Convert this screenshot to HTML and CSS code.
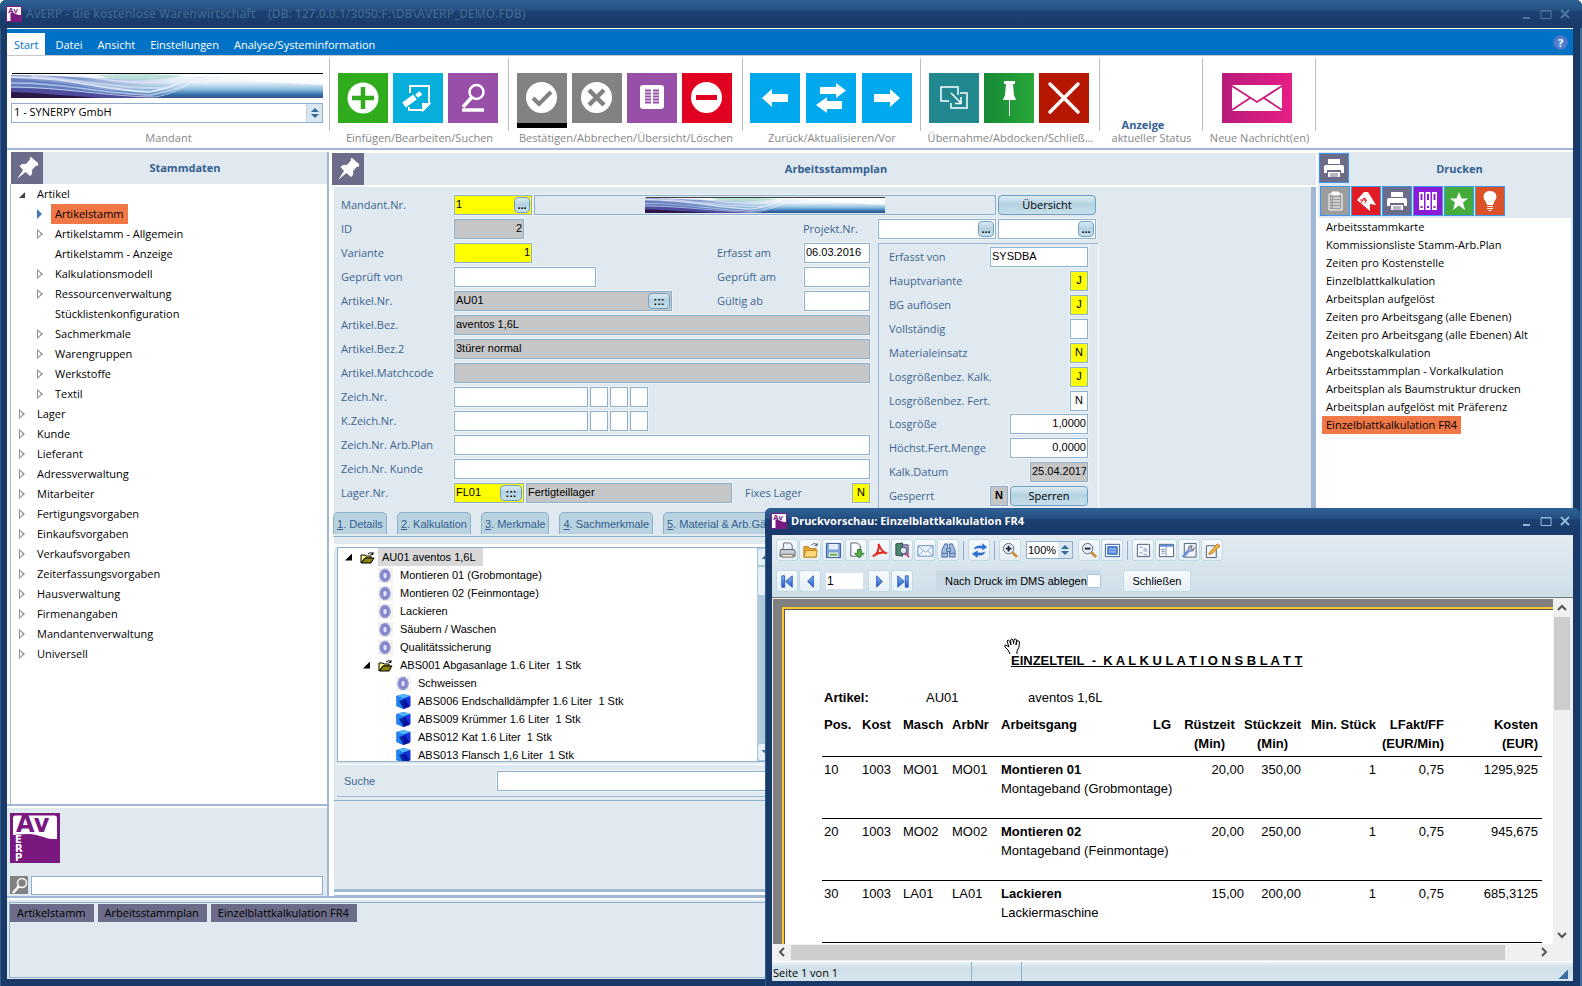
FILE: index.html
```html
<!DOCTYPE html>
<html lang="de">
<head>
<meta charset="utf-8">
<title>AvERP - die kostenlose Warenwirtschaft</title>
<link rel="stylesheet" href="styles.css">
</head>
<body>
<svg class="defs" aria-hidden="true">
  <defs>
    <linearGradient id="gWave" x1="0" y1="0" x2="0" y2="1"><stop offset="0" stop-color="#fff"/><stop offset=".35" stop-color="#f0f6fb"/><stop offset=".65" stop-color="#8fbfe0"/><stop offset=".88" stop-color="#2f6cab"/><stop offset="1" stop-color="#3a4f8c"/></linearGradient>
    <linearGradient id="gWaveL" x1="0" y1="0" x2="1" y2="0"><stop offset="0" stop-color="#8794cc"/><stop offset=".35" stop-color="#6f8cc8" stop-opacity=".9"/><stop offset="1" stop-color="#b4d0ea" stop-opacity="0"/></linearGradient>
    <linearGradient id="gPink" x1="0" y1="0" x2="1" y2="0"><stop offset="0" stop-color="#b81a7c"/><stop offset="1" stop-color="#e61e84"/></linearGradient>
    <linearGradient id="gArrow" x1="0" y1="0" x2="0" y2="1"><stop offset="0" stop-color="#8fbdf5"/><stop offset="1" stop-color="#1c55c8"/></linearGradient>
  </defs>
  <symbol id="wave" viewBox="0 0 312 25" preserveAspectRatio="none">
    <rect width="312" height="25" fill="url(#gWave)"/>
    <path d="M0 2C60 2 110 10 190 2C165 18 150 24 130 25H0z" fill="url(#gWaveL)"/>
    <path d="M0 5C40 8 90 18 140 21L120 25H0z" fill="#4a6cb4" opacity=".55"/>
    <path d="M0 15C50 15 90 22 140 23L130 25H0z" fill="#4a3c94" opacity=".75"/>
    <path d="M0 19C30 20 60 23 90 25H0z" fill="#2c1848"/>
    <path d="M85 2C110 10 150 7 172 3C150 1 120 1 85 2z" fill="#a8d8cc" opacity=".75"/>
    <path d="M190 3C222 3 235 9 312 12V1H190z" fill="#fff" opacity=".75"/>
    <g fill="none" stroke="#e8ecfa"><path d="M0 4C60 4 90 17 138 19C165 15 170 6 196 4" opacity=".85" stroke-width="2"/><path d="M0 10C50 9 90 21 140 22C168 18 174 8 210 4" opacity=".6" stroke-width="1.500"/><path d="M20 3C70 6 100 16 155 15" opacity=".6" stroke-width="2"/><path d="M0 14C50 14 100 24 145 24C172 18 178 9 192 4" opacity=".7"/><path d="M60 2C90 6 120 12 168 9" opacity=".7" stroke-width="1.500"/></g>
    <path d="M1 0H312V1H1z" fill="#000"/>
  </symbol>
  <symbol id="pin" viewBox="0 0 32 32"><path d="M20 5L27 11Q28 13 26 14L25 13.500L21 18Q22 22 19 24L14.500 20L6 27L12 18L8.500 14Q11 11 15 12L19 7.500Q18 5.500 20 5z" fill="#fff"/></symbol>
  <symbol id="printer" viewBox="0 0 28 28"><path d="M8 5H20V10H8zM6 11H22Q24 11 24 13V19H21V16H7V19H4V13Q4 11 6 11zM8 18H20V23H8z" fill="#fff"/><path d="M10 20H18M10 22H18" stroke="#6c6e8c"/></symbol>
  <symbol id="folder" viewBox="0 0 15 13"><path d="M1 4H5L6 5H11V7H5L1 12z" fill="#f8f47c" stroke="#000"/><path d="M1.500 12L5 7H14L11 12z" fill="#8a8408" stroke="#000"/><path d="M8 3Q11 0 13 3M13 1V3.500H10.500" fill="none" stroke="#000"/></symbol>
  <symbol id="gear" viewBox="0 0 15 15"><rect width="15" height="15" fill="#f3f2ee"/><ellipse cx="7" cy="7.500" rx="3.500" ry="4.500" fill="#e4e4f4" stroke="#8385cc" stroke-width="3.500"/><ellipse cx="7" cy="7.500" rx="5" ry="6.300" fill="none" stroke="#9c9ed8" stroke-width="1.500" stroke-dasharray="2 1"/></symbol>
  <symbol id="cube" viewBox="0 0 15 15"><path d="M7.500 0L14.500 2V12L7.500 15L.5 12V2z" fill="#1232dc"/><path d="M7.500 0L14.500 2L7.500 4.500L.5 2z" fill="#4fb8f8"/><path d="M.5 2L7.500 4.500V15L.5 12z" fill="#1c86f0"/><path d="M3 7L9 5L14 13L7.500 15z" fill="#06078c" opacity=".75"/></symbol>
  <symbol id="spin" viewBox="0 0 8 10"><path d="M0 4L4 0L8 4zM0 6L4 10L8 6z" fill="#336b98"/></symbol>
</svg>

<div class="window">
  <header class="titlebar">
    <svg class="app-ico" viewBox="0 0 16 16" aria-hidden="true"><rect width="16" height="16" rx="1" fill="#7a1980"/><path d="M1 1H15V9C10 9 8 6 4.500 6.500V15H1z" fill="#fff"/><text x="2" y="7">Av</text></svg>
    <h1>AvERP - die kostenlose Warenwirtschaft &nbsp;&nbsp; (DB: 127.0.0.1/3050:F:\DB\AVERP_DEMO.FDB)</h1>
    <div class="winbtns dim">
      <button aria-label="Minimieren"><svg viewBox="0 0 12 12"><path d="M2 10H9" stroke-width="2"/></svg></button>
      <button aria-label="Maximieren"><svg viewBox="0 0 12 12"><path d="M1 2.500H11V10.500H1zM1 3H11"/></svg></button>
      <button aria-label="Schließen"><svg viewBox="0 0 12 12"><path d="M2 2L10 10M10 2L2 10" stroke-width="2"/></svg></button>
    </div>
  </header>

  <div class="client">
    <nav class="menu">
      <a href="#" class="active">Start</a><a href="#">Datei</a><a href="#">Ansicht</a><a href="#">Einstellungen</a><a href="#">Analyse/Systeminformation</a>
      <button class="help" aria-label="Hilfe">?</button>
    </nav>

    <section class="ribbon">
      <div class="rg rg-mandant">
        <div class="rg-body">
          <svg class="banner"><use href="#wave"/></svg>
          <div class="combo"><select aria-label="Mandant"><option>1 - SYNERPY GmbH</option></select><span class="spin"><svg><use href="#spin"/></svg></span></div>
        </div>
        <p>Mandant</p>
      </div>
      <div class="rg rg-3">
        <div class="rg-body">
          <button class="tile green" aria-label="Einfügen"><svg viewBox="0 0 50 50"><circle cx="25" cy="25" r="15.500" fill="#fff"/><path d="M25 14V36M14 25H36" stroke="#2fab1c" stroke-width="4.500"/></svg></button>
          <button class="tile cyan" aria-label="Bearbeiten"><svg viewBox="0 0 50 50" fill="none" stroke="#fff" stroke-width="2"><path d="M17 20V13H36V31L30 37H16V34"/><path d="M36 31H30V37z" fill="#fff"/><path d="M11 32L22 24" stroke-width="6"/><path d="M23.500 23L28 20" stroke-width="4.500"/></svg></button>
          <button class="tile purple" aria-label="Suchen"><svg viewBox="0 0 50 50" fill="none" stroke="#fff"><circle cx="28.500" cy="19" r="7" stroke-width="2.500"/><path d="M24 24L15 34" stroke-width="3.500"/><path d="M14 37H36" stroke-width="3.500"/></svg></button>
        </div>
        <p>Einfügen/Bearbeiten/Suchen</p>
      </div>
      <div class="rg rg-4">
        <div class="rg-body">
          <button class="tile grey marked" aria-label="Bestätigen"><svg viewBox="0 0 50 50"><circle cx="24.500" cy="24.500" r="15.500" fill="#fff"/><path d="M16 25L22 31L34 19" fill="none" stroke="#828282" stroke-width="4"/></svg></button>
          <button class="tile grey" aria-label="Abbrechen"><svg viewBox="0 0 50 50"><circle cx="24.500" cy="24.500" r="15.500" fill="#fff"/><path d="M17 17L32 32M32 17L17 32" stroke="#828282" stroke-width="4.500"/></svg></button>
          <button class="tile purple" aria-label="Übersicht"><svg viewBox="0 0 50 50"><rect x="13" y="12" width="24" height="24" rx="3" fill="#fff"/><path d="M18 17.500H24M26 17.500H32M18 20.500H24M26 20.500H32M18 23.500H24M26 23.500H32M18 26.500H24M26 26.500H32M18 29.500H24M26 29.500H32" stroke="#984fa8" stroke-width="2"/></svg></button>
          <button class="tile red" aria-label="Löschen"><svg viewBox="0 0 50 50"><circle cx="24.500" cy="24.500" r="15.500" fill="#fff"/><path d="M14 24.500H35" stroke="#e1001f" stroke-width="5"/></svg></button>
        </div>
        <p>Bestätigen/Abbrechen/Übersicht/Löschen</p>
      </div>
      <div class="rg rg-3b">
        <div class="rg-body">
          <button class="tile sky" aria-label="Zurück"><svg viewBox="0 0 50 50" fill="#fff"><path d="M12 25L22 16V21H38V29H22V34z"/></svg></button>
          <button class="tile sky" aria-label="Aktualisieren"><svg viewBox="0 0 50 50" fill="#fff"><path d="M14 14H30V10L40 17.500L30 25V21H14zM36 28H21V24L10 32L21 40V36H36z"/></svg></button>
          <button class="tile sky" aria-label="Vor"><svg viewBox="0 0 50 50" fill="#fff"><path d="M38 25L28 16V21H12V29H28V34z"/></svg></button>
        </div>
        <p>Zurück/Aktualisieren/Vor</p>
      </div>
      <div class="rg rg-3c">
        <div class="rg-body">
          <button class="tile teal" aria-label="Übernahme"><svg viewBox="0 0 50 50" fill="none" stroke="#fff" stroke-width="1.500"><path d="M20 28H12V14H29V22M31 20H38V35H22V30M22 20L32 30M32 24V30.500H26"/></svg></button>
          <button class="tile forest" aria-label="Abdocken"><svg viewBox="0 0 50 50"><path d="M20 8H31V11H29L30 22L32 27H19L21 22L22 11H20z" fill="#fff"/><path d="M25.500 27V43" stroke="#fff"/></svg></button>
          <button class="tile brick" aria-label="Schließen"><svg viewBox="0 0 50 50"><path d="M11 11L39 39M39 11L11 39" stroke="#fff" stroke-width="3.500" stroke-linecap="round"/></svg></button>
        </div>
        <p>Übernahme/Abdocken/Schließ...</p>
      </div>
      <div class="rg rg-status">
        <div class="rg-body"><strong>Anzeige</strong></div>
        <p>aktueller Status</p>
      </div>
      <div class="rg rg-mail">
        <div class="rg-body">
          <button class="tile wide" aria-label="Neue Nachrichten"><svg viewBox="0 0 70 50"><rect width="70" height="50" fill="url(#gPink)"/><rect x="10" y="12" width="50" height="26" fill="#fff"/><path d="M10 13L35 29L60 13M10 37L28 25M60 37L42 25" fill="none" stroke="#c71b7e" stroke-width="1.800"/></svg></button>
        </div>
        <p>Neue Nachricht(en)</p>
      </div>
    </section>

    <div class="main">
      <aside class="left">
        <div class="head"><button class="pinbtn" aria-label="Anheften"><svg><use href="#pin"/></svg></button><h2>Stammdaten</h2></div>
        <ul class="nav">
          <li class="open"><a href="#">Artikel</a>
            <ul>
              <li class="cur"><a href="#">Artikelstamm</a></li>
              <li class="sub"><a href="#">Artikelstamm - Allgemein</a></li>
              <li><a href="#">Artikelstamm - Anzeige</a></li>
              <li class="sub"><a href="#">Kalkulationsmodell</a></li>
              <li class="sub"><a href="#">Ressourcenverwaltung</a></li>
              <li><a href="#">Stücklistenkonfiguration</a></li>
              <li class="sub"><a href="#">Sachmerkmale</a></li>
              <li class="sub"><a href="#">Warengruppen</a></li>
              <li class="sub"><a href="#">Werkstoffe</a></li>
              <li class="sub"><a href="#">Textil</a></li>
            </ul>
          </li>
          <li class="sub"><a href="#">Lager</a></li>
          <li class="sub"><a href="#">Kunde</a></li>
          <li class="sub"><a href="#">Lieferant</a></li>
          <li class="sub"><a href="#">Adressverwaltung</a></li>
          <li class="sub"><a href="#">Mitarbeiter</a></li>
          <li class="sub"><a href="#">Fertigungsvorgaben</a></li>
          <li class="sub"><a href="#">Einkaufsvorgaben</a></li>
          <li class="sub"><a href="#">Verkaufsvorgaben</a></li>
          <li class="sub"><a href="#">Zeiterfassungsvorgaben</a></li>
          <li class="sub"><a href="#">Hausverwaltung</a></li>
          <li class="sub"><a href="#">Firmenangaben</a></li>
          <li class="sub"><a href="#">Mandantenverwaltung</a></li>
          <li class="sub"><a href="#">Universell</a></li>
        </ul>
        <div class="brand">
          <svg class="logo" viewBox="0 0 50 50" role="img" aria-label="AvERP">
            <rect width="50" height="50" fill="#79187f"/>
            <path d="M5 2.500H45Q47 2.500 47 5V26C36 27 28 20 16 21Q8 21.500 3 22V5Q3 2.500 5 2.500z" fill="#fff"/>
            <text class="logo-av" x="6" y="19">Av</text>
            <text class="logo-erp" x="5" y="30">E</text><text class="logo-erp" x="5" y="39">R</text><text class="logo-erp" x="5" y="48">P</text>
          </svg>
          <div class="find"><label for="q"><svg viewBox="0 0 18 18" fill="none" stroke="#fff"><circle cx="12" cy="7" r="4.500" stroke-width="1.500"/><path d="M9 10L3 17" stroke-width="2.500"/></svg></label><input id="q" aria-label="Suchen"></div>
        </div>
      </aside>

      <main class="center">
        <div class="head"><button class="pinbtn" aria-label="Anheften"><svg><use href="#pin"/></svg></button><h2>Arbeitsstammplan</h2></div>
        <div class="sheet">
          <form class="form">
            <div class="row"><label for="f1">Mandant.Nr.</label><div class="field y w78"><input id="f1" value="1"><button type="button" class="dots">...</button></div><div class="field pic"><svg><use href="#wave"/></svg></div><button type="button" class="btn w98">Übersicht</button></div>
            <div class="row"><label for="f2">ID</label><div class="field g w70 r"><input id="f2" value="2" readonly></div><span class="grow"></span><label for="f3" class="l75">Projekt.Nr.</label><div class="field w118"><input id="f3"><button type="button" class="dots">...</button></div><div class="field w98"><input aria-label="Projekt Position"><button type="button" class="dots">...</button></div></div>
            <div class="cols">
              <div class="colA">
                <div class="row"><label for="f4">Variante</label><div class="field y w78 r"><input id="f4" value="1"></div><span class="grow"></span><label for="f5" class="l87">Erfasst am</label><div class="field w66"><input id="f5" value="06.03.2016"></div></div>
                <div class="row"><label for="f6">Geprüft von</label><div class="field w142"><input id="f6"></div><span class="grow"></span><label for="f7" class="l87">Geprüft am</label><div class="field w66"><input id="f7"></div></div>
                <div class="row"><label for="f8">Artikel.Nr.</label><div class="field g w218"><input id="f8" value="AU01" readonly><button type="button" class="dots wide">:::</button></div><span class="grow"></span><label for="f9" class="l87">Gültig ab</label><div class="field w66"><input id="f9"></div></div>
                <div class="row"><label for="f10">Artikel.Bez.</label><div class="field g grow"><input id="f10" value="aventos 1,6L" readonly></div></div>
                <div class="row"><label for="f11">Artikel.Bez.2</label><div class="field g grow"><input id="f11" value="3türer normal" readonly></div></div>
                <div class="row"><label for="f12">Artikel.Matchcode</label><div class="field g grow"><input id="f12" readonly></div></div>
                <div class="row"><label for="f13">Zeich.Nr.</label><div class="field w134"><input id="f13"></div><div class="field w18"><input aria-label="Zeich.Nr. Teil 2"></div><div class="field w18"><input aria-label="Zeich.Nr. Teil 3"></div><div class="field w18"><input aria-label="Zeich.Nr. Teil 4"></div></div>
                <div class="row"><label for="f14">K.Zeich.Nr.</label><div class="field w134"><input id="f14"></div><div class="field w18"><input aria-label="K.Zeich.Nr. Teil 2"></div><div class="field w18"><input aria-label="K.Zeich.Nr. Teil 3"></div><div class="field w18"><input aria-label="K.Zeich.Nr. Teil 4"></div></div>
                <div class="row"><label for="f15">Zeich.Nr. Arb.Plan</label><div class="field grow"><input id="f15"></div></div>
                <div class="row"><label for="f16">Zeich.Nr. Kunde</label><div class="field grow"><input id="f16"></div></div>
                <div class="row"><label for="f17">Lager.Nr.</label><div class="field y w70"><input id="f17" value="FL01"><button type="button" class="dots wide">:::</button></div><div class="field g w206"><input aria-label="Lagerbezeichnung" value="Fertigteillager" readonly></div><span class="grow"></span><label for="f18" class="l107">Fixes Lager</label><div class="field y w18 c"><input id="f18" value="N"></div></div>
              </div>
              <div class="colB">
                <div class="row"><label for="g1">Erfasst von</label><div class="field w98"><input id="g1" value="SYSDBA"></div></div>
                <div class="row"><label for="g2">Hauptvariante</label><div class="field y w18 c"><input id="g2" value="J"></div></div>
                <div class="row"><label for="g3">BG auflösen</label><div class="field y w18 c"><input id="g3" value="J"></div></div>
                <div class="row"><label for="g4">Vollständig</label><div class="field w18 c"><input id="g4"></div></div>
                <div class="row"><label for="g5">Materialeinsatz</label><div class="field y w18 c"><input id="g5" value="N"></div></div>
                <div class="row"><label for="g6">Losgrößenbez. Kalk.</label><div class="field y w18 c"><input id="g6" value="J"></div></div>
                <div class="row tight"><label for="g7">Losgrößenbez. Fert.</label><div class="field w18 c"><input id="g7" value="N"></div></div>
                <div class="row"><label for="g8">Losgröße</label><div class="field w78 r"><input id="g8" value="1,0000"></div></div>
                <div class="row"><label for="g9">Höchst.Fert.Menge</label><div class="field w78 r"><input id="g9" value="0,0000"></div></div>
                <div class="row"><label for="g10">Kalk.Datum</label><div class="field g w58 r"><input id="g10" value="25.04.2017" readonly></div></div>
                <div class="row"><label for="g11">Gesperrt</label><div class="field g w18 c b"><input id="g11" value="N" readonly></div><button type="button" class="btn w78">Sperren</button></div>
              </div>
            </div>
          </form>
          <div class="tabs">
            <button><u>1</u>. Details</button><button><u>2</u>. Kalkulation</button><button><u>3</u>. Merkmale</button><button><u>4</u>. Sachmerkmale</button><button><u>5</u>. Material &amp; Arb.Gänge</button>
          </div>
          <div class="tabpage">
            <div class="parts">
              <ul>
                <li class="l1"><i class="tri"></i><svg class="fo"><use href="#folder"/></svg><span class="sel">AU01 aventos 1,6L</span></li>
                <li class="l2"><svg><use href="#gear"/></svg><span>Montieren 01 (Grobmontage)</span></li>
                <li class="l2"><svg><use href="#gear"/></svg><span>Montieren 02 (Feinmontage)</span></li>
                <li class="l2"><svg><use href="#gear"/></svg><span>Lackieren</span></li>
                <li class="l2"><svg><use href="#gear"/></svg><span>Säubern / Waschen</span></li>
                <li class="l2"><svg><use href="#gear"/></svg><span>Qualitätssicherung</span></li>
                <li class="l1b"><i class="tri"></i><svg class="fo"><use href="#folder"/></svg><span>ABS001 Abgasanlage 1.6 Liter&nbsp; 1 Stk</span></li>
                <li class="l3"><svg><use href="#gear"/></svg><span>Schweissen</span></li>
                <li class="l3"><svg><use href="#cube"/></svg><span>ABS006 Endschalldämpfer 1.6 Liter&nbsp; 1 Stk</span></li>
                <li class="l3"><svg><use href="#cube"/></svg><span>ABS009 Krümmer 1.6 Liter&nbsp; 1 Stk</span></li>
                <li class="l3"><svg><use href="#cube"/></svg><span>ABS012 Kat 1.6 Liter&nbsp; 1 Stk</span></li>
                <li class="l3"><svg><use href="#cube"/></svg><span>ABS013 Flansch 1,6 Liter&nbsp; 1 Stk</span></li>
              </ul>
              <div class="sb"><b class="up"><i></i></b><b class="thumb"></b><b class="dn"><i></i></b></div>
            </div>
            <div class="suche"><label for="s1">Suche</label><div class="field grow"><input id="s1"></div></div>
          </div>
        </div>
      </main>

      <aside class="right">
        <div class="rhead">
          <div class="rtop"><button class="sq slate" aria-label="Drucken"><svg><use href="#printer"/></svg></button><h2>Drucken</h2></div>
          <div class="sqs">
            <button class="sq lgrey" aria-label="Listen"><svg viewBox="0 0 28 28" fill="none" stroke="#fff"><path d="M11 7H8V23H21V7H18M12 11H19M12 14H19M12 17H19M12 20H19M9.500 11H10.500M9.500 14H10.500M9.500 17H10.500M9.500 20H10.500"/><path d="M11 5H18V8H11z" fill="#fff"/></svg></button>
            <button class="sq crimson" aria-label="Etiketten"><svg viewBox="0 0 28 28"><path d="M5 13L12 5H16L24 18L18 17L18 24z" fill="#fff"/><path d="M8 13H14M9 16L12 11L15 14M12 11Q15 11 13 16" fill="none" stroke="#e01c26"/></svg></button>
            <button class="sq slate" aria-label="Drucker"><svg><use href="#printer"/></svg></button>
            <button class="sq violet" aria-label="Ordner"><svg viewBox="0 0 28 28"><path d="M5 5H10V23H5zM11.500 5H16.500V23H11.500zM18 5H23V23H18z" fill="#fff"/><path d="M6.500 7H8.500V13H6.500zM13 7H15V13H13zM19.500 7H21.500V13H19.500zM6.500 19H8.500V21H6.500zM13 19H15V21H13zM19.500 19H21.500V21H19.500z" fill="#8a1cd8"/></svg></button>
            <button class="sq lime" aria-label="Favoriten"><svg viewBox="0 0 28 28"><path d="M14 5L16.500 11.500H23L18 15.500L20 23L14 18.500L8 23L10 15.500L5 11.500H11.500z" fill="#fff"/></svg></button>
            <button class="sq orange" aria-label="Hinweise"><svg viewBox="0 0 28 28"><path d="M14 4C21 4 22 11 18.500 14L17 18H11L9.500 14C6 11 7 4 14 4z" fill="#fff"/><path d="M11 19.500H17M11 21.500H17M12.500 23.500H15.500" stroke="#fff"/></svg></button>
          </div>
        </div>
        <ul class="reports">
          <li><a href="#">Arbeitsstammkarte</a></li><li><a href="#">Kommissionsliste Stamm-Arb.Plan</a></li><li><a href="#">Zeiten pro Kostenstelle</a></li><li><a href="#">Einzelblattkalkulation</a></li><li><a href="#">Arbeitsplan aufgelöst</a></li><li><a href="#">Zeiten pro Arbeitsgang (alle Ebenen)</a></li><li><a href="#">Zeiten pro Arbeitsgang (alle Ebenen) Alt</a></li><li><a href="#">Angebotskalkulation</a></li><li><a href="#">Arbeitsstammplan - Vorkalkulation</a></li><li><a href="#">Arbeitsplan als Baumstruktur drucken</a></li><li><a href="#">Arbeitsplan aufgelöst mit Präferenz</a></li><li><a href="#" class="hot">Einzelblattkalkulation FR4</a></li>
        </ul>
      </aside>
    </div>

    <footer class="tasks"><div><button>Artikelstamm</button><button>Arbeitsstammplan</button><button>Einzelblattkalkulation FR4</button></div></footer>
  </div>

  <section class="preview">
    <header class="titlebar light">
      <svg class="app-ico" viewBox="0 0 16 16" aria-hidden="true"><rect width="16" height="16" rx="1" fill="#7a1980"/><path d="M1 1H15V9C10 9 8 6 4.500 6.500V15H1z" fill="#fff"/><text x="2" y="7">Av</text></svg>
      <h2>Druckvorschau: Einzelblattkalkulation FR4</h2>
      <div class="winbtns">
        <button aria-label="Minimieren"><svg viewBox="0 0 12 12"><path d="M2 10H9" stroke-width="2"/></svg></button>
        <button aria-label="Maximieren"><svg viewBox="0 0 12 12"><path d="M1 2.500H11V10.500H1zM1 3H11"/></svg></button>
        <button aria-label="Schließen"><svg viewBox="0 0 12 12"><path d="M2 2L10 10M10 2L2 10" stroke-width="2"/></svg></button>
      </div>
    </header>
    <div class="pv">
      <div class="bars">
        <div class="bar">
          <button aria-label="Drucken"><svg viewBox="0 0 18 18"><path d="M5 1H12L14 4V9H4z" fill="#e8f0fa" stroke="#667"/><path d="M2 8H16L17 10V15H1V10z" fill="#c8ccd4" stroke="#556"/><path d="M3 13H15V16H3z" fill="#f8e8c0" stroke="#667"/></svg></button>
          <button aria-label="Öffnen"><svg viewBox="0 0 18 18"><path d="M2 5H7L8 7H15V16H2z" fill="#e8a830" stroke="#b87a18"/><path d="M2 16L4 9H16L15 16z" fill="#fbd878" stroke="#c08820"/><path d="M10 3Q13 0 16 3M16 1V4H13" fill="none" stroke="#456"/></svg></button>
          <button aria-label="Speichern"><svg viewBox="0 0 18 18"><path d="M1.500 1.500H16.500V16.500H1.500z" fill="#7a9fd8" stroke="#34569a"/><path d="M4 2H14V8H4z" fill="#e4eef9"/><path d="M4 11H14V16H4z" fill="#eef6e0"/><path d="M5 13.500H13" stroke="#6aa850" stroke-width="2"/></svg></button>
          <button aria-label="Exportieren"><svg viewBox="0 0 18 18"><path d="M3 1H10L13 4V15H3z" fill="#fafcff" stroke="#556"/><path d="M10 8H14V12H17L12 17L7 12H10z" fill="#58a848" stroke="#2c7830"/></svg></button>
          <button aria-label="PDF"><svg viewBox="0 0 18 18"><path d="M2 15C7 13 9 7 8 2C10 8 12 11 17 12C12 10 6 12 2 15z" fill="none" stroke="#e02820" stroke-width="2"/></svg></button>
          <button aria-label="Suche im Bericht"><svg viewBox="0 0 18 18"><path d="M2 2L9 1V15L2 14z" fill="#4a8870" stroke="#345"/><path d="M9 3H15V13H9z" fill="#a8a0d8" stroke="#546"/><circle cx="10" cy="9" r="3.500" fill="#dce8f8" stroke="#445"/><path d="M12 12L16 16" stroke="#c04080" stroke-width="2"/></svg></button>
          <button aria-label="E-Mail"><svg viewBox="0 0 18 18"><path d="M1 4H17V15H1z" fill="#f4f9ff" stroke="#5a86bc"/><path d="M1 4L9 11L17 4M1 15L7 9M17 15L11 9" fill="none" stroke="#7aa0d0"/></svg></button>
          <button aria-label="Suchen"><svg viewBox="0 0 18 18"><path d="M2 9L5 2H8V16H2zM10 2H13L16 9V16H10z" fill="#a0bce0" stroke="#4a6ca0"/><path d="M7 7H11V10H7zM2 12H8M10 12H16" stroke="#4a6ca0" fill="#b8cce8"/></svg></button>
          <i class="sep"></i>
          <button aria-label="Aktualisieren"><svg viewBox="0 0 18 18"><path d="M3 8Q4 3 12 4V1L17 5.500L12 9V7Q7 6 3 8zM15 10Q14 15 7 14V17L1 12.500L7 9V11Q11 12 15 10z" fill="#2c70d0"/></svg></button>
          <i class="sep"></i>
          <button aria-label="Vergrößern"><svg viewBox="0 0 18 18"><path d="M11 11L16 16" stroke="#c89038" stroke-width="3"/><circle cx="7" cy="7" r="5.500" fill="#e4effa" stroke="#556070"/><path d="M7 4V10M4 7H10" stroke="#223" stroke-width="2"/></svg></button>
          <div class="zoomf"><input aria-label="Zoom" value="100%"><span class="spin"><svg><use href="#spin"/></svg></span></div>
          <button aria-label="Verkleinern"><svg viewBox="0 0 18 18"><path d="M11 11L16 16" stroke="#c89038" stroke-width="3"/><circle cx="7" cy="7" r="5.500" fill="#e4effa" stroke="#556070"/><path d="M4 7H10" stroke="#223" stroke-width="2"/></svg></button>
          <button aria-label="Ganze Seite"><svg viewBox="0 0 18 18"><path d="M1.500 2.500H16.500V15.500H1.500z" fill="#fff" stroke="#345a98"/><path d="M4 5H14V13H4z" fill="#5a90e0" stroke="#2a5cb0"/><path d="M5 7.500H13M5 10.500H13" stroke="#a8c8f4"/></svg></button>
          <i class="sep"></i>
          <button aria-label="Gliederung"><svg viewBox="0 0 18 18"><path d="M2.500 2.500H15.500V15.500H2.500z" fill="#f4f6fa" stroke="#4a5a78"/><path d="M5 5.500H8M9 7.500H13M9 9.500H13M5 11.500H8M9 13.500H13" stroke="#7a94bc"/></svg></button>
          <button aria-label="Miniaturen"><svg viewBox="0 0 18 18"><path d="M1.500 2.500H16.500V15.500H1.500z" fill="#fff" stroke="#4a5a78"/><path d="M2 4H16" stroke="#5a90e0" stroke-width="2"/><path d="M8.500 5V15M3 8H7M4 10H7M4 12H7" stroke="#6a88b0"/></svg></button>
          <button aria-label="Seite einrichten"><svg viewBox="0 0 18 18"><path d="M3.500 1.500H16V16H3.500z" fill="#f2f4fa" stroke="#4a5a78"/><path d="M2 16L9 8" stroke="#6a94d8" stroke-width="3"/><path d="M8 7Q8 3 12 4L10.500 6.500L12 8L14 6Q14 10 10 10" fill="#b0b8c4" stroke="#667"/></svg></button>
          <button aria-label="Bearbeiten"><svg viewBox="0 0 18 18"><path d="M2.500 4H13V16.500H2.500z" fill="#f2f4fa" stroke="#4a5a78"/><path d="M6 11L14 2L17 4L9 12L5 13z" fill="#f2b440" stroke="#b87820"/></svg></button>
        </div>
        <div class="bar two">
          <button aria-label="Erste Seite"><svg viewBox="0 0 18 18"><path d="M3 3H6V15H3zM14 3V15L7 9z" fill="url(#gArrow)" stroke="#2a5cc0"/></svg></button>
          <button aria-label="Vorige Seite"><svg viewBox="0 0 18 18"><path d="M12 3V15L6 9z" fill="url(#gArrow)" stroke="#2a5cc0"/></svg></button>
          <input class="page-no" aria-label="Seite" value="1">
          <button aria-label="Nächste Seite"><svg viewBox="0 0 18 18"><path d="M6 3V15L12 9z" fill="url(#gArrow)" stroke="#2a5cc0"/></svg></button>
          <button aria-label="Letzte Seite"><svg viewBox="0 0 18 18"><path d="M12 3H15V15H12zM4 3V15L11 9z" fill="url(#gArrow)" stroke="#2a5cc0"/></svg></button>
          <label class="dms">Nach Druck im DMS ablegen<input type="checkbox"></label>
          <button class="close">Schließen</button>
        </div>
      </div>
      <div class="canvas">
        <div class="view">
          <article class="paper">
            <svg class="hand" viewBox="0 0 18 17"><path d="M6 16Q5 12 1 9Q0 7 2 7L5 9L3 3Q4 1 5.500 3L7 7L6.500 2Q8 0 9 2L9.500 6L10 1.500Q12 0 12.500 2L12 7L13 3Q15 2 15.500 4Q15.500 10 13 13V16" fill="#fff" stroke="#000"/></svg>
            <h3>EINZELTEIL&nbsp; - &nbsp;K A L K U L A T I O N S B L A T T</h3>
            <p class="art"><b>Artikel:</b><span>AU01</span><span>aventos 1,6L</span></p>
            <table>
              <colgroup><col class="c1"><col class="c2"><col class="c3"><col class="c3"><col class="c5"><col class="c6"><col class="c7"><col class="c8"><col class="c9"><col class="c10"><col class="c11"></colgroup>
              <thead><tr><th>Pos.</th><th>Kost</th><th>Masch</th><th>ArbNr</th><th>Arbeitsgang</th><th>LG</th><th class="m">Rüstzeit<br>(Min)</th><th class="m">Stückzeit<br>(Min)</th><th class="n">Min. Stück</th><th class="n">LFakt/FF<br>(EUR/Min)</th><th class="n">Kosten<br>(EUR)</th></tr></thead>
              <tbody>
                <tr><td>10</td><td>1003</td><td>MO01</td><td>MO01</td><td><b>Montieren 01</b><br>Montageband (Grobmontage)</td><td></td><td class="n">20,00</td><td class="n">350,00</td><td class="n">1</td><td class="n">0,75</td><td class="n">1295,925</td></tr>
                <tr><td>20</td><td>1003</td><td>MO02</td><td>MO02</td><td><b>Montieren 02</b><br>Montageband (Feinmontage)</td><td></td><td class="n">20,00</td><td class="n">250,00</td><td class="n">1</td><td class="n">0,75</td><td class="n">945,675</td></tr>
                <tr><td>30</td><td>1003</td><td>LA01</td><td>LA01</td><td><b>Lackieren</b><br>Lackiermaschine</td><td></td><td class="n">15,00</td><td class="n">200,00</td><td class="n">1</td><td class="n">0,75</td><td class="n">685,3125</td></tr>
              </tbody>
            </table>
          </article>
        </div>
        <div class="vs"><svg viewBox="0 0 8 6"><path d="M0 5L4 1L8 5"/></svg><i></i><svg viewBox="0 0 8 6"><path d="M0 1L4 5L8 1"/></svg></div>
        <div class="hs"><svg viewBox="0 0 6 8"><path d="M5 0L1 4L5 8"/></svg><i></i><svg viewBox="0 0 6 8"><path d="M1 0L5 4L1 8"/></svg></div>
      </div>
      <footer class="status"><span>Seite 1 von 1</span><span></span><span></span></footer>
    </div>
  </section>
</div>
</body>
</html>
```
FILE: styles.css
```css
* { box-sizing: border-box; }
body { margin: 0; background: #fff; font: 11px/14px "Open Sans", "Noto Sans", sans-serif; color: #000; }
ul { list-style: none; margin: 0; padding: 0; }
h1, h2, h3, p { margin: 0; }
a { color: inherit; text-decoration: none; }
button, input, select { font: inherit; color: inherit; margin: 0; padding: 0; border: 0; border-radius: 0; }
button { flex: none; cursor: pointer; }
svg { display: block; }
.defs { position: absolute; width: 0; height: 0; }

/* window frame */
.window { position: relative; height: 100vh; min-height: 900px; display: flex; flex-direction: column; padding: 0 9px 7px 7px; background: #193a69; border-radius: 6px 6px 0 0; overflow: hidden; box-shadow: inset 1px 1px 0 #2d5d8e, inset -2px 0 0 #3b6c9c; }
.titlebar { flex: none; height: 28px; display: flex; align-items: center; gap: 4px; margin: 0 -9px 0 -7px; padding: 0 11px 0 6px; background: linear-gradient(#2f6294 0, #255084 10px, #1b3f70 12px, #193a69); color: #3d668f; }
.titlebar h1 { flex: 1; font-size: 12px; line-height: 16px; font-weight: 600; white-space: nowrap; }
.titlebar h2 { flex: 1; font-size: 11px; line-height: 16px; white-space: nowrap; }
.app-ico { width: 16px; height: 16px; }
.app-ico text { font: bold 8px "Liberation Sans", sans-serif; fill: #7a1980; }
.winbtns { display: flex; gap: 7px; color: #8cbcdc; }
.winbtns.dim { color: #4a769f; }
.winbtns button { width: 12px; height: 12px; background: none; }
.winbtns svg { width: 12px; height: 12px; fill: none; stroke: currentColor; }
.client { flex: 1; min-height: 0; display: flex; flex-direction: column; background: #fff; border-top: 1px solid #fff; }

/* menu and ribbon */
.menu { flex: none; height: 27px; display: flex; align-items: flex-end; padding: 0 5px 0 0; background: #0072c6; border-bottom: 1px solid #c8c8c8; color: #fff; }
.menu a { height: 22px; line-height: 24px; padding: 0 7px 0 8px; }
.menu .active { background: #fff; color: #0072c6; padding: 0 7px; margin-right: 2px; }
.help { width: 15px; height: 15px; margin: 0 0 5px auto; border-radius: 50%; background: radial-gradient(#5f8ede, #3c68c0); color: #fff; font-weight: bold; line-height: 15px; }
.ribbon { flex: none; display: flex; height: 94px; border-bottom: 2px solid #a0b8d4; margin-bottom: 2px; }
.rg { flex: none; display: flex; flex-direction: column; color: #868686; }
.rg-body { height: 73px; margin-top: 2px; padding-top: 15px; border-right: 1px solid #bdbdbd; display: flex; gap: 5px; }
.rg p { height: 14px; text-align: center; white-space: nowrap; }
.rg-mandant { width: 323px; }
.rg-mandant .rg-body { flex-direction: column; padding: 15px 6px 0 4px; }
.rg-3 { width: 179px; } .rg-3 .rg-body { padding-left: 8px; }
.rg-4 { width: 234px; } .rg-4 .rg-body { padding-left: 8px; }
.rg-3b { width: 178px; } .rg-3b .rg-body { padding-left: 7px; }
.rg-3c { width: 179px; } .rg-3c .rg-body { padding-left: 8px; }
.rg-3b .rg-body { gap: 6px; }
.rg-status { width: 103px; } .rg-status .rg-body { align-items: flex-end; justify-content: center; padding: 0 16px 0 0; line-height: 12px; color: #33608f; }
.rg-mail { width: 113px; } .rg-mail .rg-body { padding-left: 19px; }
.banner { width: 100%; height: 25px; }
.combo, .zoomf { display: flex; height: 20px; border: 1px solid #8db1cc; background: #fff; color: #000; }
.combo select { flex: 1; appearance: none; background: none; padding: 0 2px 2px; outline: 0; }
.spin { width: 16px; display: flex; align-items: center; justify-content: center; background: #dbe7f0; border-left: 1px solid #c0d4e2; }
.spin svg { width: 8px; height: 10px; }
.tile { width: 50px; height: 50px; }
.tile svg { width: 100%; height: 50px; }
.tile.wide { width: 70px; }
.green { background: #2fab1c; } .cyan { background: #06aedc; } .purple { background: #984fa8; } .grey { background: #828282; } .red { background: #e1001f; }
.sky { background: #00a9ee; } .teal { background: #22888f; } .forest { background: linear-gradient(90deg, #178a36, #28a738); } .brick { background: #b51700; }
.marked { box-shadow: 0 5px 0 #000; }

/* main columns */
.main { flex: 1; min-height: 0; display: flex; border-bottom: 2px solid #a0b8d4; }
.head { flex: none; display: flex; height: 32px; background: #e1e9f0; }
.head h2, .rtop h2 { flex: 1; text-align: center; align-self: center; font-size: 11px; line-height: 16px; color: #33608f; }
.pinbtn { width: 32px; height: 32px; background: #6b6c8a; }
.pinbtn svg { width: 32px; height: 32px; }
.left { flex: none; width: 322px; display: flex; flex-direction: column; border-right: 2px solid #a0b8d4; }
.left .head { margin-left: 4px; }
.nav { flex: 1; margin-left: 3px; border-left: 1px solid #a0b8d4; overflow: hidden; }
.nav li { padding-left: 22px; }
.nav ul { margin-left: -4px; }
.nav a { position: relative; display: inline-block; height: 20px; line-height: 20px; padding: 0 4px; white-space: nowrap; vertical-align: top; }
.nav .cur > a { background: #f07746; }
.nav a::before { position: absolute; left: -14px; top: 5px; }
.nav .sub > a::before { content: ""; width: 6px; height: 10px; background: #8c8c8c; clip-path: polygon(0 0, 100% 50%, 0 100%, 0 0, 1px 2px, 1px 8px, 4px 5px, 1px 2px); }
.nav .cur > a::before { content: ""; width: 5px; height: 10px; background: #3c78b8; clip-path: polygon(0 0, 100% 50%, 0 100%); }
.nav .open > a::before { content: ""; top: 8px; width: 6px; height: 6px; background: #404040; clip-path: polygon(100% 0, 100% 100%, 0 100%); }
.brand { flex: none; padding: 5px 4px 1px 3px; background: #e1e9f0; border-top: 2px solid #a0b8d4; box-shadow: inset 0 2px 0 #fff; }
.logo { width: 50px; height: 50px; margin: 2px 0 13px; }
.logo-av { font: bold 24px "DejaVu Sans", sans-serif; fill: #79187f; }
.logo-erp { font: bold 10px "DejaVu Sans", sans-serif; fill: #fff; }
.find { display: flex; gap: 3px; }
.find svg { width: 18px; height: 18px; background: #828282; }
.find input { flex: 1; height: 19px; border: 1px solid #8db1cc; background: #fff; }

.center { flex: 1; min-width: 0; display: flex; flex-direction: column; margin: 1px 0 0 3px; background: #fff; overflow: hidden; }
.center .head { padding-right: 8px; }
.sheet { flex: 1; min-height: 0; margin: 2px 0 4px 2px; padding: 8px 0 0; background: #e1e9f0; border-right: 5px solid #a0b8d4; border-bottom: 3px solid #a0b8d4; box-shadow: 0 3px 0 #fff, 0 6px 0 #a0b8d4; }
.form { padding-left: 7px; color: #40658f; }
.row { display: flex; gap: 2px; height: 24px; align-items: flex-start; }
.row.tight { height: 23px; }
.row label { flex: none; width: 111px; line-height: 20px; white-space: nowrap; }
.row .l75 { width: 73px; } .row .l87 { width: 85px; } .row .l107 { width: 105px; }
.field { flex: none; display: flex; align-items: center; height: 20px; border: 1px solid #8db1cc; background: #fff; box-shadow: 0 0 0 1px #edf2f6; color: #000; font: 11px/14px "Liberation Sans", sans-serif; overflow: hidden; }
.field input { flex: 1; width: 100%; min-width: 0; height: 14px; padding: 0 1px; margin-bottom: 2px; background: none; outline: 0; }
.y { background: #ff0; } .g { background: #c6c6c6; } .r input { text-align: right; } .c input { text-align: center; padding: 0; } .b input { font-weight: bold; }
.grow { flex: 1; }
.w18 { width: 18px; } .w58 { width: 58px; } .w66 { width: 66px; } .w70 { width: 70px; } .w78 { width: 78px; } .w98 { width: 98px; } .w118 { width: 118px; } .w134 { width: 134px; } .w142 { width: 142px; } .w206 { width: 206px; } .w218 { width: 218px; }
.pic { flex: 1; background: none; justify-content: center; }
.pic svg { width: 240px; height: 16px; }
.btn, .dots { background: linear-gradient(#dcebf3, #b4d2e2 45%, #c8dfeb); border: 1px solid #6f9fc2; border-radius: 4px; color: #000; }
.btn { height: 20px; font: 11px/16px "Open Sans", sans-serif; }
.dots { width: 16px; height: 16px; margin-right: 1px; font-weight: bold; line-height: 9px; }
.dots.wide { width: 22px; }
.cols { display: flex; gap: 8px; }
.form > .row { max-width: 755px; }
.colA { flex: 1; max-width: 529px; }
.colB { flex: none; width: 220px; padding: 3px 10px 0 10px; border: solid #a0b8d4; border-width: 1px 0 0 1px; box-shadow: 1px 0 0 #fff; height: 265px; }
.colB .row label { flex: 1; width: auto; }
.tabs { display: flex; gap: 10px; height: 25px; margin: 4px 0 0 -1px; border-bottom: 1px solid #8db1cc; padding-bottom: 2px; }
.tabs button { height: 22px; padding: 0 3px; background: #b9d2e0; border: 1px solid #8db1cc; border-bottom: 0; border-radius: 5px 5px 0 0; color: #33608f; font: 11px/20px "Liberation Sans", sans-serif; }
.tabpage { margin: 7px 0 0 -1px; border-top: 3px solid #fff; border-left: 1px solid #fff; padding-left: 3px; border-bottom: 1px solid #8db1cc; font: 11px/18px "Liberation Sans", sans-serif; height: 257px; display: flex; flex-direction: column; }
.parts { width: 438px; height: 215px; display: flex; flex: none; background: #fff; border: 1px solid #8db1cc; overflow: hidden; }
.parts ul { flex: 1; }
.parts li { display: flex; align-items: center; height: 18px; white-space: nowrap; }
.parts span { padding: 0 7px 0 4px; }
.parts li svg { width: 15px; height: 15px; flex: none; margin-right: 3px; }
.parts .fo { height: 13px; }
.tri { width: 7px; height: 7px; margin-right: 8px; background: #000; clip-path: polygon(100% 0, 100% 100%, 0 100%); }
.l1 { padding-left: 7px; } .l2 { padding-left: 40px; } .l1b { padding-left: 25px; } .l3 { padding-left: 58px; }
.sel { background: #d8d8d8; }
.sb { width: 17px; display: flex; flex-direction: column; background: #b0cbdb; }
.sb b { height: 18px; border: 1px solid #a8c8da; border-radius: 3px; background: #e6f1f7; display: grid; place-items: center; }
.sb b i { width: 8px; height: 4px; background: #336b98; clip-path: polygon(0 100%, 50% 0, 100% 100%); }
.sb .dn i { clip-path: polygon(0 0, 50% 100%, 100% 0); }
.sb .thumb { height: 30px; } .sb .dn { margin-top: auto; }
.suche { flex: none; display: flex; align-items: center; margin-top: 2px; height: 33px; padding: 0 8px 0 7px; border-top: 1px solid #fff; border-bottom: 1px solid #a0b8d4; color: #40658f; font-size: 11px; }
.suche label { width: 153px; }

.right { flex: none; width: 255px; margin-left: 2px; border-right: 2px solid #dde5ee; }
.rhead { padding: 1px 1px 2px; background: #e1e9f0; }
.rtop { display: flex; height: 33px; padding-bottom: 2px; }
.sq { width: 30px; height: 30px; border: 1px solid #3b96f0; }
.sq svg { width: 28px; height: 28px; }
.sqs { display: flex; gap: 1px; padding-left: 1px; }
.slate { background: #6b6c8a; } .lgrey { background: #9c9c9c; } .crimson { background: #e01c26; } .violet { background: #8a1cd8; } .lime { background: #45ac3c; } .orange { background: #dc5228; }
.reports { padding: 0 4px; }
.reports a { display: inline-block; height: 18px; line-height: 18px; padding: 0 4px; white-space: nowrap; vertical-align: top; }
.reports .hot { background: #f07746; }

.tasks { flex: none; height: 81px; padding: 2px 2px 1px; border-top: 2px solid #fff; background: #e1e9f0; }
.tasks div { height: 76px; padding: 1px 0; border: 1px solid #8db1cc; display: flex; align-items: flex-start; gap: 4px; }
.tasks button { height: 18px; padding: 0 8px 0 7px; background: #6b6c8a; line-height: 16px; }

/* print preview window, floats above the main window */
.preview { position: absolute; left: 765px; right: 2px; top: 508px; bottom: 0; display: flex; flex-direction: column; padding: 0 7px 5px; background: #193a69; border-radius: 6px 6px 0 0; overflow: hidden; box-shadow: inset 1px 1px 0 #2d5d8e; }
.preview .titlebar { height: 27px; margin: 0 -7px; padding: 0 9px 1px 6px; color: #fff; }
.pv { flex: 1; min-height: 0; display: flex; flex-direction: column; background: #e6edf3; }
.bars { flex: none; height: 62px; padding: 4px 4px 0; background: linear-gradient(#e4ebf2, #cddee8); }
.bar { display: flex; gap: 1px; height: 23px; }
.bar button { width: 22px; height: 22px; display: grid; place-items: center; border: 1px solid #c0dae6; border-radius: 3px; background: linear-gradient(#f8fbfd, #e6eff5); }
.bar svg { width: 17px; height: 17px; }
.sep { width: 1px; margin: 2px 3px; background: #8db1cc; }
.zoomf { width: 47px; height: 18px; margin: 2px 4px 0; }
.zoomf input { width: 31px; padding: 0 1px; font: 11px/16px "Liberation Sans", sans-serif; }
.zoomf .spin { width: 14px; border-left: 0; }
.bar .spin svg { width: 8px; height: 10px; }
.two { margin-top: 8px; font: 12px/20px "Liberation Sans", sans-serif; }
.page-no { width: 37px; height: 16px; margin: 3px 4px 0; background: #fff; padding: 0 1px; }
.dms { display: flex; align-items: center; width: 164px; height: 22px; margin-left: 22px; padding-left: 9px; font: 11px/20px "Liberation Sans", sans-serif; background: #c9dae5; white-space: nowrap; }
.dms input { appearance: none; flex: none; width: 14px; height: 14px; background: #fff; border: 1px solid #a8c8da; border-radius: 2px; }
.bar .close { width: 68px; margin-left: 22px; font: 11px/18px "Liberation Sans", sans-serif; }
.canvas { flex: 1; min-height: 0; display: grid; grid-template: 1fr 16px / 1fr 18px; padding: 1px 2px 1px 1px; border-top: 1px solid #777; background: #f0f0f0; }
.view { background: #808080; padding: 8px 0 0 9px; overflow: hidden; }
.paper { position: relative; height: 400px; border: solid #ffc62e; border-width: 2px 0 0 2px; background: #fff; box-shadow: inset 1px 1px 0 #555; padding: 42px 12px 0 38px; font: 13px/19px "Liberation Sans", sans-serif; }
.paper h3 { margin-left: 189px; font-size: 13px; line-height: 19px; text-decoration: underline; white-space: nowrap; }
.hand { position: absolute; left: 220px; top: 29px; width: 18px; height: 17px; }
.art { display: flex; margin: 18px 0 8px 2px; }
.art b { width: 102px; } .art span { width: 102px; }
table { width: 720px; border-collapse: collapse; table-layout: fixed; }
.c1 { width: 40px; } .c2 { width: 41px; } .c3 { width: 49px; } .c5 { width: 152px; } .c6 { width: 22px; } .c7 { width: 69px; } .c8 { width: 57px; } .c9 { width: 75px; } .c10 { width: 68px; } .c11 { width: 98px; }
th, td { padding: 0; text-align: left; vertical-align: top; white-space: nowrap; }
th:first-child, td:first-child { padding-left: 2px; }
th:last-child, td:last-child { padding-right: 4px; }
.n { text-align: right; } .m { text-align: center; }
thead th { height: 41px; }
tbody td { height: 62px; padding-top: 3px; border-top: 1px solid #000; }
tbody tr:last-child td { border-bottom: 1px solid #000; }
.vs, .hs { display: flex; align-items: center; justify-content: space-between; }
.vs { flex-direction: column; padding: 6px 1px 6px; }
.vs i { width: 16px; height: 93px; margin: 6px 0 auto; background: #cdcdcd; }
.hs { padding: 0 6px; }
.hs i { flex: 1; height: 15px; margin: 0 36px 0 6px; background: #cdcdcd; }
.vs svg { width: 8px; height: 6px; } .hs svg { width: 6px; height: 8px; }
.vs svg, .hs svg { fill: none; stroke: #555; stroke-width: 2; overflow: visible; }
.status { flex: none; display: flex; height: 20px; line-height: 21px; background: linear-gradient(#ecf3f7, #cfdfe9 30%, #d8e5ed); border-top: 1px solid #fff; }
.status span { width: 50px; border-right: 1px solid #8db1cc; }
.status span:first-child { width: 200px; padding-left: 1px; }
.status span:last-child { flex: 1; border: 0; background: linear-gradient(135deg, transparent 50%, #3a70a4 50%) right 5px bottom 2px / 9px 9px no-repeat; }
```
